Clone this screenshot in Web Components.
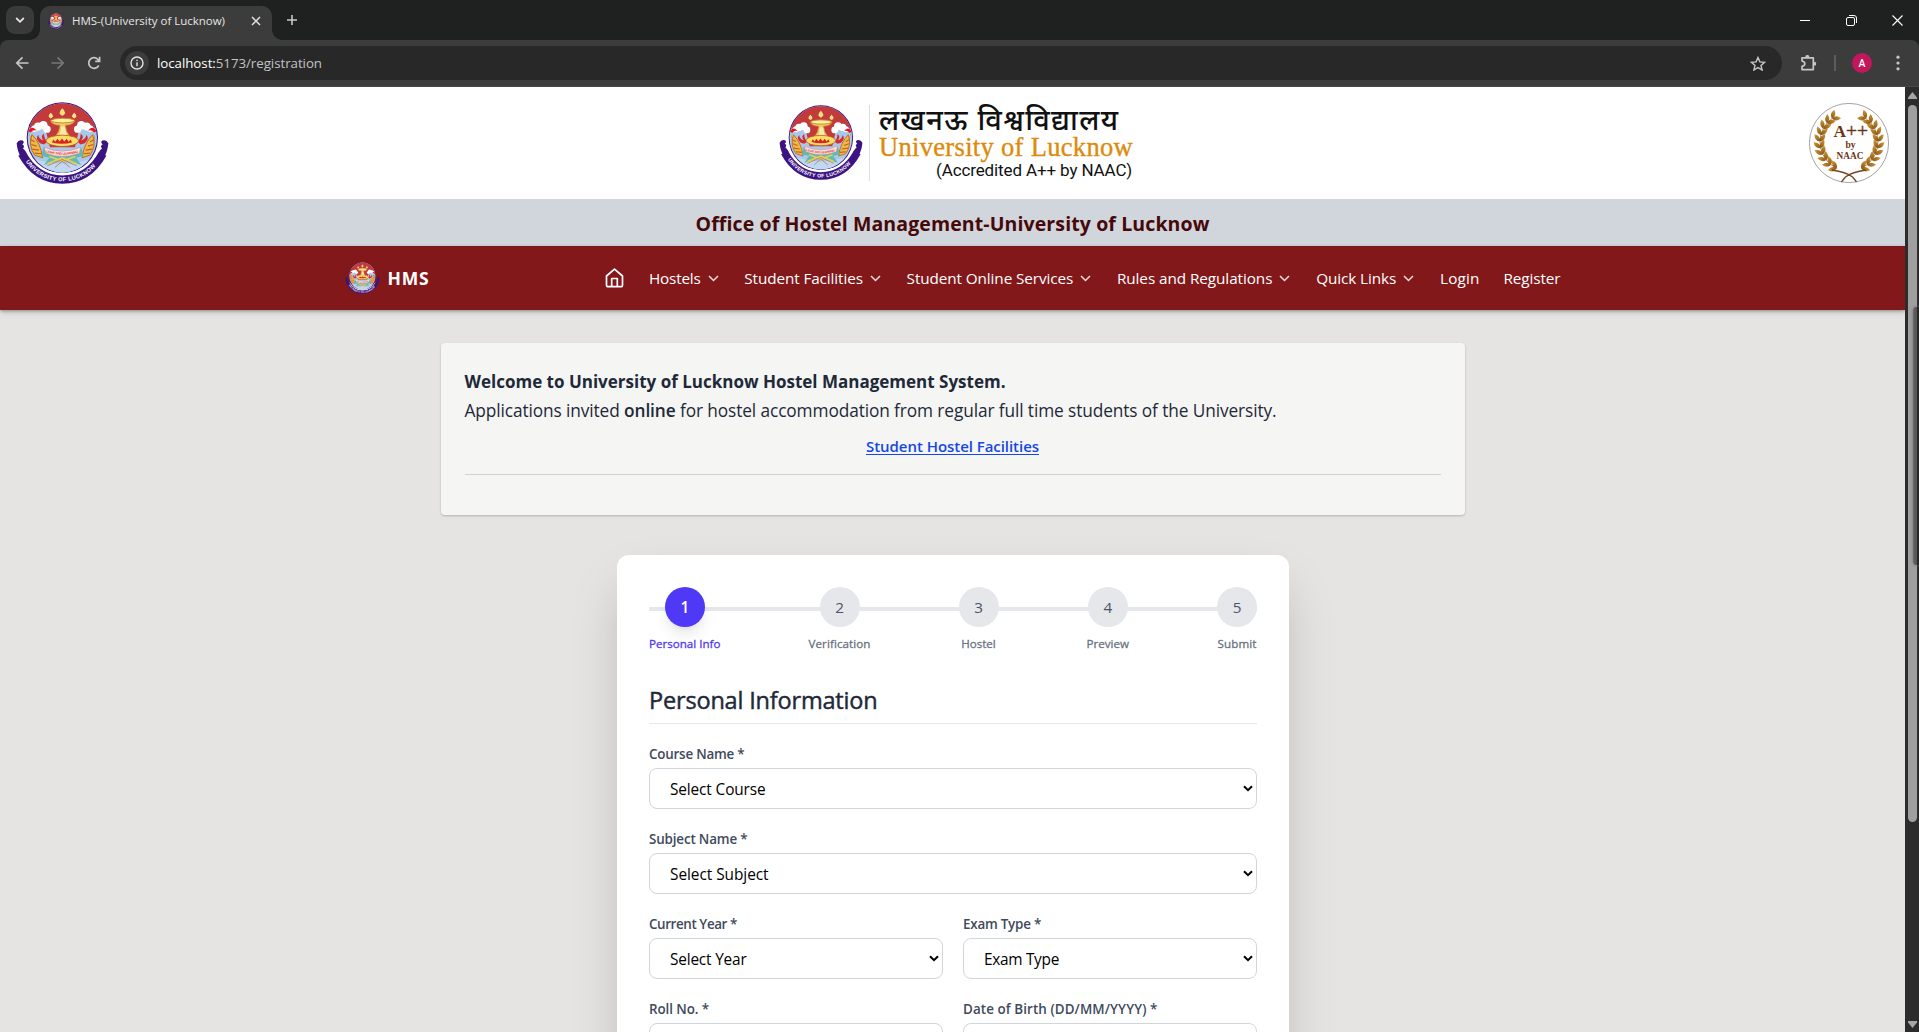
<!DOCTYPE html>
<html lang="en">
<head>
<meta charset="utf-8">
<title>HMS-(University of Lucknow)</title>
<style>
html,body{margin:0;height:100%;overflow:hidden;font-family:"Open Sans","Noto Sans",sans-serif;color:#1e2939}
</style>
</head>
<body>
<hms-window></hms-window>
<script>
function define(name, html, init){
  const t=document.createElement('template'); t.innerHTML=html;
  customElements.define(name, class extends HTMLElement{
    constructor(){super(); this.attachShadow({mode:'open'}).append(t.content.cloneNode(true)); if(init) init(this,this.shadowRoot);}
  });
}

/* University emblem: domed picture over a scroll band */
define('uni-emblem', `<style>:host{display:block;flex:none}svg{display:block;width:100%;height:100%}</style>
<svg viewBox="48 36 279 247" preserveAspectRatio="none">
<defs><clipPath id="c"><circle cx="187" cy="144" r="104"/></clipPath><path id="band" d="M74 210Q112 273 187 275Q262 273 300 210"/></defs>
<circle cx="187" cy="144" r="107" fill="#3c1482"/>
<g clip-path="url(#c)">
<rect x="80" y="36" width="214" height="220" fill="#a9c9ea"/>
<path d="M80 36H294V118Q250 98 236 125L225 172H150L138 125Q124 98 80 118Z" fill="#c23a3a"/>
<g fill="#fff"><circle cx="104" cy="116" r="10"/><circle cx="114" cy="110" r="12"/><circle cx="130" cy="106" r="13"/><circle cx="141" cy="118" r="11"/><circle cx="270" cy="116" r="10"/><circle cx="260" cy="110" r="12"/><circle cx="244" cy="106" r="13"/><circle cx="233" cy="118" r="11"/></g>
<path d="M84 124Q96 104 110 122Q98 118 92 128ZM290 124Q278 104 264 122Q276 118 282 128Z" fill="#f01018"/>
<path d="M88 130Q100 175 128 190Q108 195 94 172ZM286 130Q274 175 246 190Q266 195 280 172Z" fill="#e08a24"/>
<path d="M96 134Q122 160 128 204L104 196Q84 168 96 134ZM278 134Q252 160 246 204L270 196Q290 168 278 134Z" fill="#efb84a" stroke="#c4681b" stroke-width="3"/>
<path d="M92 150l12 6M94 164l16 5M97 178l20 3M104 190l20 2M282 150l-12 6M280 164l-16 5M277 178l-20 3M270 190l-20 2" stroke="#c0601c" stroke-width="3.500"/>
<path d="M120 160Q104 146 115 135Q116 148 130 152Q120 138 132 132Q132 148 142 156L132 164ZM254 160Q270 146 259 135Q258 148 244 152Q254 138 242 132Q242 148 232 156L242 164Z" fill="#d42a30"/>
<path d="M94 204Q187 240 280 204L270 250H104Z" fill="#c0d8f0"/>
</g>
<path d="M180 70Q187 44 194 70Q187 82 180 70ZM147 80Q152 60 158 80Q152 88 147 80ZM217 80Q223 60 228 80Q223 88 217 80Z" fill="#ffe25c" stroke="#fff4c0" stroke-width="2.500"/>
<path d="M152 93Q156 105 180 106L176 124Q168 140 156 150H220Q208 140 200 124L196 106Q218 105 224 93Q187 80 152 93Z" fill="#f0cf62" stroke="#c98b35" stroke-width="2.500"/>
<ellipse cx="188" cy="92" rx="35" ry="7" fill="#fff0a0" stroke="#c58535" stroke-width="3"/>
<path d="M184 110H194L200 138H180Z" fill="#f7e9b0"/>
<ellipse cx="187" cy="153" rx="49" ry="17" fill="#f3df66" stroke="#c8502f" stroke-width="2.500"/>
<path d="M156 158l4-9 6 7 6-9 7 8 7-9 7 9 7-8 6 9 6-7 4 9Q187 166 156 158Z" fill="#dc2222"/>
<path d="M130 174L187 190L244 174L250 198L228 204L244 226L208 216L187 204L166 216L132 226L148 204L124 198Z" fill="#5fb9b5"/>
<path d="M142 222L187 204L230 222M148 200L187 214L226 200" fill="none" stroke="#e8d052" stroke-width="5"/>
<path d="M142 228L187 209L230 228M165 233L187 214L210 233" fill="none" stroke="#b5602a" stroke-width="2"/>
<path d="M132 172Q187 196 242 172L238 190Q187 209 138 190Z" fill="#fbe4e2" stroke="#e27c76" stroke-width="1.500"/>
<path id="m" d="M138 187Q187 203 238 187" fill="none"/>
<text font-family="Liberation Sans" font-size="10" font-weight="700" fill="#e23a3a"><textPath href="#m" textLength="98">LIGHT AND LEARNING</textPath></text>
<path d="M82 196Q120 253 187 253Q254 253 292 196" fill="none" stroke="#fff" stroke-width="8"/>
<path d="M66 192Q108 269 187 270Q266 269 308 192" fill="none" stroke="#3c1482" stroke-width="25"/>
<path d="M50 160Q56 148 68 152Q75 157 67 164Q76 168 69 176Q80 184 80 196L64 204Q52 186 50 160ZM325 160Q319 148 307 152Q300 157 308 164Q299 168 306 176Q295 184 295 196L311 204Q323 186 325 160Z" fill="#3c1482"/>
<text font-family="Liberation Sans" font-size="17" font-weight="700" fill="#fff"><textPath href="#band" startOffset="6" textLength="244">UNIVERSITY OF LUCKNOW</textPath></text>
</svg>`);

/* Accreditation seal with laurel branches */
define('naac-seal', `<style>:host{display:block;width:80px;height:80px;flex:none}svg{display:block}</style>
<svg width="80" height="80" viewBox="-40 -40 80 80">
<defs><linearGradient id="g"><stop offset="0" stop-color="#8a5510"/><stop offset="1" stop-color="#d09a3c"/></linearGradient></defs>
<circle r="39.600" fill="#fff" stroke="#8d8d8d" stroke-width=".8"/>
<g id="l"></g>
<path d="M-17 27Q-3 29 3.500 34Q7 38 7.500 39M17 27Q3 29 -3.500 34Q-7 38 -7.500 39" fill="none" stroke="#7a4423" stroke-width="1.300"/>
<g font-family="Liberation Serif" font-weight="700" fill="#6e3412">
<text x="-15.500" y="-6.500" font-size="17" textLength="12.500" lengthAdjust="spacingAndGlyphs">A</text><text x="-3" y="-6.500" font-size="19" font-weight="400" stroke="#6e3412" stroke-width=".4" textLength="22" lengthAdjust="spacingAndGlyphs">++</text>
<text x="-3.500" y="5" font-size="9.500" textLength="10">by</text><text x="-12.500" y="16" font-size="10.500" textLength="27" lengthAdjust="spacingAndGlyphs">NAAC</text></g>
</svg>`, (h,r)=>{
  let s='';
  for(const k of [-1,1]){
    let d='';
    for(let i=0;i<10;i++){
      const a=(25+i*13.2)*Math.PI/180, x=k*29*Math.sin(a), y=29*Math.cos(a)-1;
      d+=(i?'L':'M')+x.toFixed(1)+' '+y.toFixed(1);
      const t=Math.atan2(-Math.sin(a),k*Math.cos(a))*180/Math.PI;
      for(const o of [-38,34]) s+=`<path transform="translate(${x} ${y}) rotate(${t-o*k})" d="M0 0Q4 -4.200 9.200 0Q4 4.200 0 0Z" fill="url(#g)"/>`;
    }
    s+=`<path d="${d}" fill="none" stroke="#8a5a20" stroke-width=".7"/>`;
  }
  r.getElementById('l').innerHTML=s;
});

define('tab-strip', `<style>
:host{display:flex;height:40px;background:#1f2120;align-items:flex-end;color:#e6e6e6}
.search{width:28px;height:28px;margin:0 6px 6px;border-radius:9px;background:#3a3a3a;display:flex;align-items:center;justify-content:center}
.tab{width:232px;height:34px;border-radius:10px 10px 0 0;background:#3c3c3c;display:flex;align-items:center;font-size:11.500px;box-sizing:border-box;padding:0 11px 5px 8px;position:relative}
.tab::before,.tab::after{content:"";position:absolute;bottom:0;width:10px;height:10px}
.tab::before{left:-10px;background:radial-gradient(circle at 0 0,transparent 9.500px,#3c3c3c 10px)}
.tab::after{right:-10px;background:radial-gradient(circle at 100% 0,transparent 9.500px,#3c3c3c 10px)}
uni-emblem{width:16px;height:16px;margin-right:8px}
.x{margin-left:auto}.plus{margin:0 0 14px 14px}
.win{margin-left:auto;display:flex;gap:35px;align-items:center;margin:0 16px 14px auto}
svg{display:block;fill:none;stroke:#e3e3e3}
</style>
<div class="search"><svg width="10" height="8" stroke-width="1.800"><path d="M1.200 2L5 5.800L8.800 2"/></svg></div>
<div class="tab"><uni-emblem></uni-emblem><fit-text w="153">HMS-(University of Lucknow)</fit-text><svg class="x" width="10" height="10" stroke-width="1.500"><path d="M1 1L9 9M9 1L1 9"/></svg></div>
<svg class="plus" width="12" height="12" stroke-width="1.600" style="stroke:#c7c7c7"><path d="M6 1V11M1 6H11"/></svg>
<div class="win"><svg width="11" height="11" stroke-width="1" style="stroke:#fff"><path d="M0 5.500H10"/></svg>
<svg width="11" height="11" stroke-width="1" style="stroke:#fff"><rect x=".5" y="2.500" width="8" height="8" rx="1.500"/><path d="M3 .5H8Q10.500 .5 10.500 3V8"/></svg>
<svg width="11" height="11" stroke-width="1.100" style="stroke:#fff"><path d="M.5 .5L10.500 10.500M10.500 .5L.5 10.500"/></svg></div>`);

define('tool-bar', `<style>
:host{display:flex;height:47px;box-sizing:border-box;background:#1f2120}
.in{flex:1;display:flex;align-items:center;background:#3c3c3c;border-radius:8px 8px 0 0;border-bottom:1px solid #484848;padding:0 16px 0 15px}
svg{display:block;fill:none;stroke:#c7c7c7;stroke-width:1.700;flex:none}
.omni{flex:1;height:34px;margin-left:19px;border-radius:17px;background:#282828;display:flex;align-items:center;font-size:13.300px;color:#c3c3c3;padding:0 16px 0 5px}
.info{width:24px;height:24px;border-radius:12px;background:#3c3c3c;display:flex;align-items:center;justify-content:center;margin-right:8px}
b{font-weight:400;color:#fff}
.av{width:20px;height:20px;border-radius:10px;background:#c2185b;color:#fff;display:flex;align-items:center;justify-content:center;font:500 10.500px Roboto,sans-serif}
</style><div class="in">
<svg width="14" height="14"><path d="M13.500 7H2M7.500 1.300L1.800 7L7.500 12.700"/></svg>
<svg width="14" height="14" style="margin-left:22px;stroke:#777"><path d="M.5 7H12M6.500 1.300L12.200 7L6.500 12.700"/></svg>
<svg width="14" height="14" style="margin-left:22px"><path d="M11.800 9.300A5.300 5.300 0 1 1 11.200 3.700L12.500 5.200M12.600 .8V5.300H8.200"/></svg>
<div class="omni"><div class="info"><svg width="14" height="14" style="stroke:#e3e3e3;stroke-width:1.400"><circle cx="7" cy="7" r="6"/><path d="M7 6.300V10.300M7 3.700V5.100"/></svg></div><fit-text w="165"><b>localhost:</b>5173/registration</fit-text>
<svg width="16" height="15" style="margin-left:auto;stroke-width:1.400"><path d="M8 1.500L9.900 5.900L14.600 6.300L11 9.400L12.100 14L8 11.600L3.900 14L5 9.400L1.400 6.300L6.100 5.900Z"/></svg></div>
<svg width="18" height="17" style="margin-left:18px"><path d="M2 2.800H13.300V14.600H2V11.400Q4.800 10.800 4.800 8.700Q4.800 6.600 2 6Z" stroke-linejoin="round"/><path d="M6 2Q7.300 .2 8.700 2M14.200 7.300Q16 8.700 14.200 10.200" stroke-width="2.200"/></svg>
<div style="width:2px;height:16px;background:#5c5c5c;margin:0 16px"></div>
<div class="av">A</div>
<svg width="4" height="16" style="margin-left:24px;margin-right:3px;stroke:none;fill:#c7c7c7"><circle cx="2" cy="2.200" r="1.600"/><circle cx="2" cy="8" r="1.600"/><circle cx="2" cy="13.800" r="1.600"/></svg>
</div>`);

define('scroll-bar', `<style>
:host{display:flex;flex-direction:column;align-items:center;width:14px;flex:none;background:#2c2c2c;padding:5px 0 4px 1px;box-sizing:border-box;position:relative;overflow:hidden}
.th{width:9px;height:717px;margin-top:6px;border-radius:5px;background:#9f9f9f}
.dn{margin-top:auto}svg{display:block;fill:#a6a6a6}
.ov{position:absolute;left:8px;top:220px;width:12px;height:258px;border-radius:4px;background:linear-gradient(90deg,#707070,#585858 2px 4px,#262626 4px);box-shadow:0 0 3px #666}
</style><svg width="9" height="7"><path d="M4.500 0L9 5.500V7H0V5.500Z"/></svg><div class="th"></div><svg class="dn" width="9" height="7"><path d="M4.500 7L9 1.500V0H0V1.500Z"/></svg><div class="ov"></div>`);

define('site-header', `<style>
:host{display:flex;height:112px;box-sizing:border-box;background:#fff;align-items:center;justify-content:space-between;padding:0 16px}
.e1{width:93px;height:82px}
.mid{display:flex;align-items:center;margin-right:7px}
.mid uni-emblem{width:84px;height:75px;margin-top:-2px}
.t{border-left:1px solid #ddd;height:76px;width:263px;box-sizing:border-box;margin-left:6px;padding-left:9px;display:flex;flex-direction:column;color:#111}
.h{font:500 29px/36px "Noto Sans Devanagari","Noto Serif Devanagari","Lohit Devanagari","FreeSerif","Noto Sans",sans-serif;height:29px}
.u{font:400 26.500px/26px "Liberation Serif",serif;-webkit-text-stroke:.35px #dd8a0b;color:#dd8a0b;height:26px}
.a{font:400 17px/20px Roboto,sans-serif;align-self:flex-end}
</style>
<uni-emblem class="e1"></uni-emblem>
<div class="mid"><uni-emblem></uni-emblem><div class="t"><div class="h"><fit-text w="250">लखनऊ विश्वविद्यालय</fit-text></div><div class="u"><fit-text w="254">University of Lucknow</fit-text></div><div class="a"><fit-text w="196">(Accredited A++ by NAAC)</fit-text></div></div></div>
<naac-seal></naac-seal>`);

define('office-banner', `<style>:host{display:flex;height:47px;background:#d1d5dc;align-items:center;justify-content:center;color:#460809;font-weight:700;font-size:19.500px;line-height:28px;box-sizing:border-box;padding-top:2px}</style><fit-text w="514"><slot></slot></fit-text>`);

define('nav-item', `<style>:host{display:flex;align-items:center;color:#fff;font-size:15.300px;line-height:24px}svg{display:none;margin-left:7px;fill:none;stroke:#f3dede;stroke-width:1.500}:host([menu]) svg{display:block}</style>
<fit-text><slot></slot></fit-text><svg width="11" height="7"><path d="M1 1L5.500 5.500L10 1"/></svg>`,(h,r)=>r.querySelector('fit-text').setAttribute('w',h.getAttribute('w')));

define('site-nav', `<style>
:host{display:block;height:64px;background:#82181a;box-shadow:0 1px 3px rgba(0,0,0,.3),0 4px 6px -1px rgba(0,0,0,.12);position:relative}
.in{width:1216px;height:64px;margin:0 auto;display:flex;align-items:center;justify-content:space-between}
.b{display:flex;align-items:center;color:#fff;font-weight:700;font-size:17.500px}
.b uni-emblem{width:35px;height:32px;margin-right:8px}
.l{display:flex;align-items:center}
svg{display:block;margin-right:25px}
nav-item{margin-right:25.800px}nav-item:nth-last-child(2){margin-right:24px}nav-item:last-child{margin-right:0}
</style><div class="in"><div class="b"><uni-emblem></uni-emblem><fit-text w="42">HMS</fit-text></div>
<div class="l"><svg width="19" height="20" viewBox="0 0 19 20" fill="none" stroke="#fff" stroke-width="1.700" stroke-linejoin="round"><path d="M1.500 8L9.500 1.200L17.500 8V17Q17.500 18.700 15.800 18.700H3.200Q1.500 18.700 1.500 17Z"/><path d="M6.700 18.500V10.500H12.300V18.500"/></svg>
<nav-item menu w="51.500">Hostels</nav-item><nav-item menu w="118.500">Student Facilities</nav-item><nav-item menu w="166.500">Student Online Services</nav-item><nav-item menu w="155.500">Rules and Regulations</nav-item><nav-item menu w="80">Quick Links</nav-item><nav-item w="39.500">Login</nav-item><nav-item w="57">Register</nav-item></div></div>`);

define('welcome-card', `<style>
:host{display:flex;flex-direction:column;width:1024px;height:172px;box-sizing:border-box;margin:33px auto 0;padding:24px;background:#f5f5f3;border-radius:4px;box-shadow:0 1px 3px rgba(0,0,0,.1),0 1px 2px rgba(0,0,0,.12);line-height:29px;font-size:17.300px}
.t{font-weight:700;font-size:17px}.l{align-self:center;margin-top:9px;line-height:24px;font-size:15px;font-weight:600;color:#1447e6}
.l fit-text{text-decoration:underline;text-underline-offset:2px}
hr{width:100%;border:0;border-top:1px solid #ccd3dc;margin:16px 0 0}
</style><div class="t"><fit-text w="541">Welcome to University of Lucknow Hostel Management System.</fit-text></div>
<div class="n"><fit-text w="812">Applications invited <b style="font-weight:600">online</b> for hostel accommodation from regular full time students of the University.</fit-text></div>
<div class="l"><fit-text w="173">Student Hostel Facilities</fit-text></div><hr>`);

define('step-item', `<style>
:host{display:flex;flex-direction:column;align-items:center;position:relative;font-size:11.600px;font-weight:400;-webkit-text-stroke:.3px;color:#6a7282;line-height:16px}
.c{width:40px;height:40px;border-radius:50%;background:#e5e7eb;color:#4a5565;-webkit-text-stroke:0;display:flex;align-items:center;justify-content:center;font-size:15.300px;margin-bottom:9px}
:host([active]){color:#4f39f6}:host([active]) .c{background:#4f39f6;color:#fff;font-weight:600;box-shadow:0 10px 15px -3px rgba(0,0,0,.1),0 4px 6px -4px rgba(0,0,0,.1)}
</style><div class="c"></div><fit-text><slot></slot></fit-text>`,(h,r)=>{r.querySelector('.c').textContent=h.getAttribute('n');r.querySelector('fit-text').setAttribute('w',h.getAttribute('w'))});

define('form-field', `<style>
:host{display:block;flex:1}
label{display:block;font-size:13.400px;font-weight:600;color:#3f4a5c;line-height:20px;margin-bottom:4px}
.s{height:41px;box-sizing:border-box;border:1px solid #d1d5dc;border-radius:8px;background:#fff;display:flex;align-items:center;justify-content:space-between;padding:2px 3px 0 20px;color:#000;font-size:15.400px}
svg{display:block;fill:none;stroke:#000;stroke-width:2;margin-top:-3px}
</style><label><fit-text class="a"></fit-text></label><div class="s"></div>`,(h,r)=>{
  const a=r.querySelector('.a');a.textContent=h.getAttribute('label');a.setAttribute('w',h.getAttribute('lw'));
  if(h.hasAttribute('value')) r.querySelector('.s').innerHTML=`<fit-text w="${h.getAttribute('vw')}">${h.getAttribute('value')}</fit-text><svg width="10" height="7"><path d="M1 1.200L5 5.200L9 1.200"/></svg>`;
});

define('registration-form', `<style>
:host{display:block;width:672px;height:900px;box-sizing:border-box;margin:40px 0 0 617px;padding:32px;background:#fff;border-radius:12px;box-shadow:0 25px 50px -12px rgba(0,0,0,.25)}
.steps{display:flex;justify-content:space-between;background:linear-gradient(#e5e7eb,#e5e7eb) 0 20px/100% 4px no-repeat;height:65px}
h2{margin:34px 0 20px;padding-bottom:8px;height:29px;font-size:23.500px;line-height:28px;font-weight:400;-webkit-text-stroke:.45px;border-bottom:1px solid #e5e7eb;color:#1e2939}
.row{display:flex;gap:20px;margin-bottom:20px}
</style><div class="steps"><step-item active n="1" w="71.500">Personal Info</step-item><step-item n="2" w="62">Verification</step-item><step-item n="3" w="34.500">Hostel</step-item><step-item n="4" w="42.500">Preview</step-item><step-item n="5" w="39">Submit</step-item></div>
<h2><fit-text w="228.500">Personal Information</fit-text></h2>
<div class="row"><form-field label="Course Name *" lw="95.500" value="Select Course" vw="95.500"></form-field></div>
<div class="row"><form-field label="Subject Name *" lw="98.500" value="Select Subject" vw="98.500"></form-field></div>
<div class="row"><form-field label="Current Year *" lw="88" value="Select Year" vw="76.500"></form-field><form-field label="Exam Type *" lw="78" value="Exam Type" vw="75"></form-field></div>
<div class="row"><form-field label="Roll No. *" lw="60" ></form-field><form-field label="Date of Birth (DD/MM/YYYY) *" lw="194.500"></form-field></div>`);

define('hms-window', `<style>
:host{display:flex;flex-direction:column;width:1919px;height:1032px;overflow:hidden}
.v{flex:1;display:flex;min-height:0}.p{flex:1;background:#e5e4e2;overflow:hidden}
</style><tab-strip></tab-strip><tool-bar></tool-bar><div class="v"><div class="p"><site-header></site-header><office-banner>Office of Hostel Management-University of Lucknow</office-banner><site-nav></site-nav><welcome-card></welcome-card><registration-form></registration-form></div><scroll-bar></scroll-bar></div>`);

/* Single-line text whose tracking is set so that it spans the width w */
customElements.define('fit-text', class extends HTMLElement{
  constructor(){super();this.attachShadow({mode:'open'}).innerHTML='<style>:host{display:inline-block;white-space:nowrap}</style><slot></slot>';}
  connectedCallback(){
    const w=parseFloat(this.getAttribute('w')); if(!w) return;
    const s=this.querySelector('slot');
    const txt=s?s.assignedNodes({flatten:true}).map(n=>n.textContent).join(''):this.textContent;
    const n=[...txt.trim()].length, nat=this.getBoundingClientRect().width;
    if(n&&nat) this.style.letterSpacing=((w-nat)/n).toFixed(4)+'px';
  }
});
</script>
</body>
</html>
